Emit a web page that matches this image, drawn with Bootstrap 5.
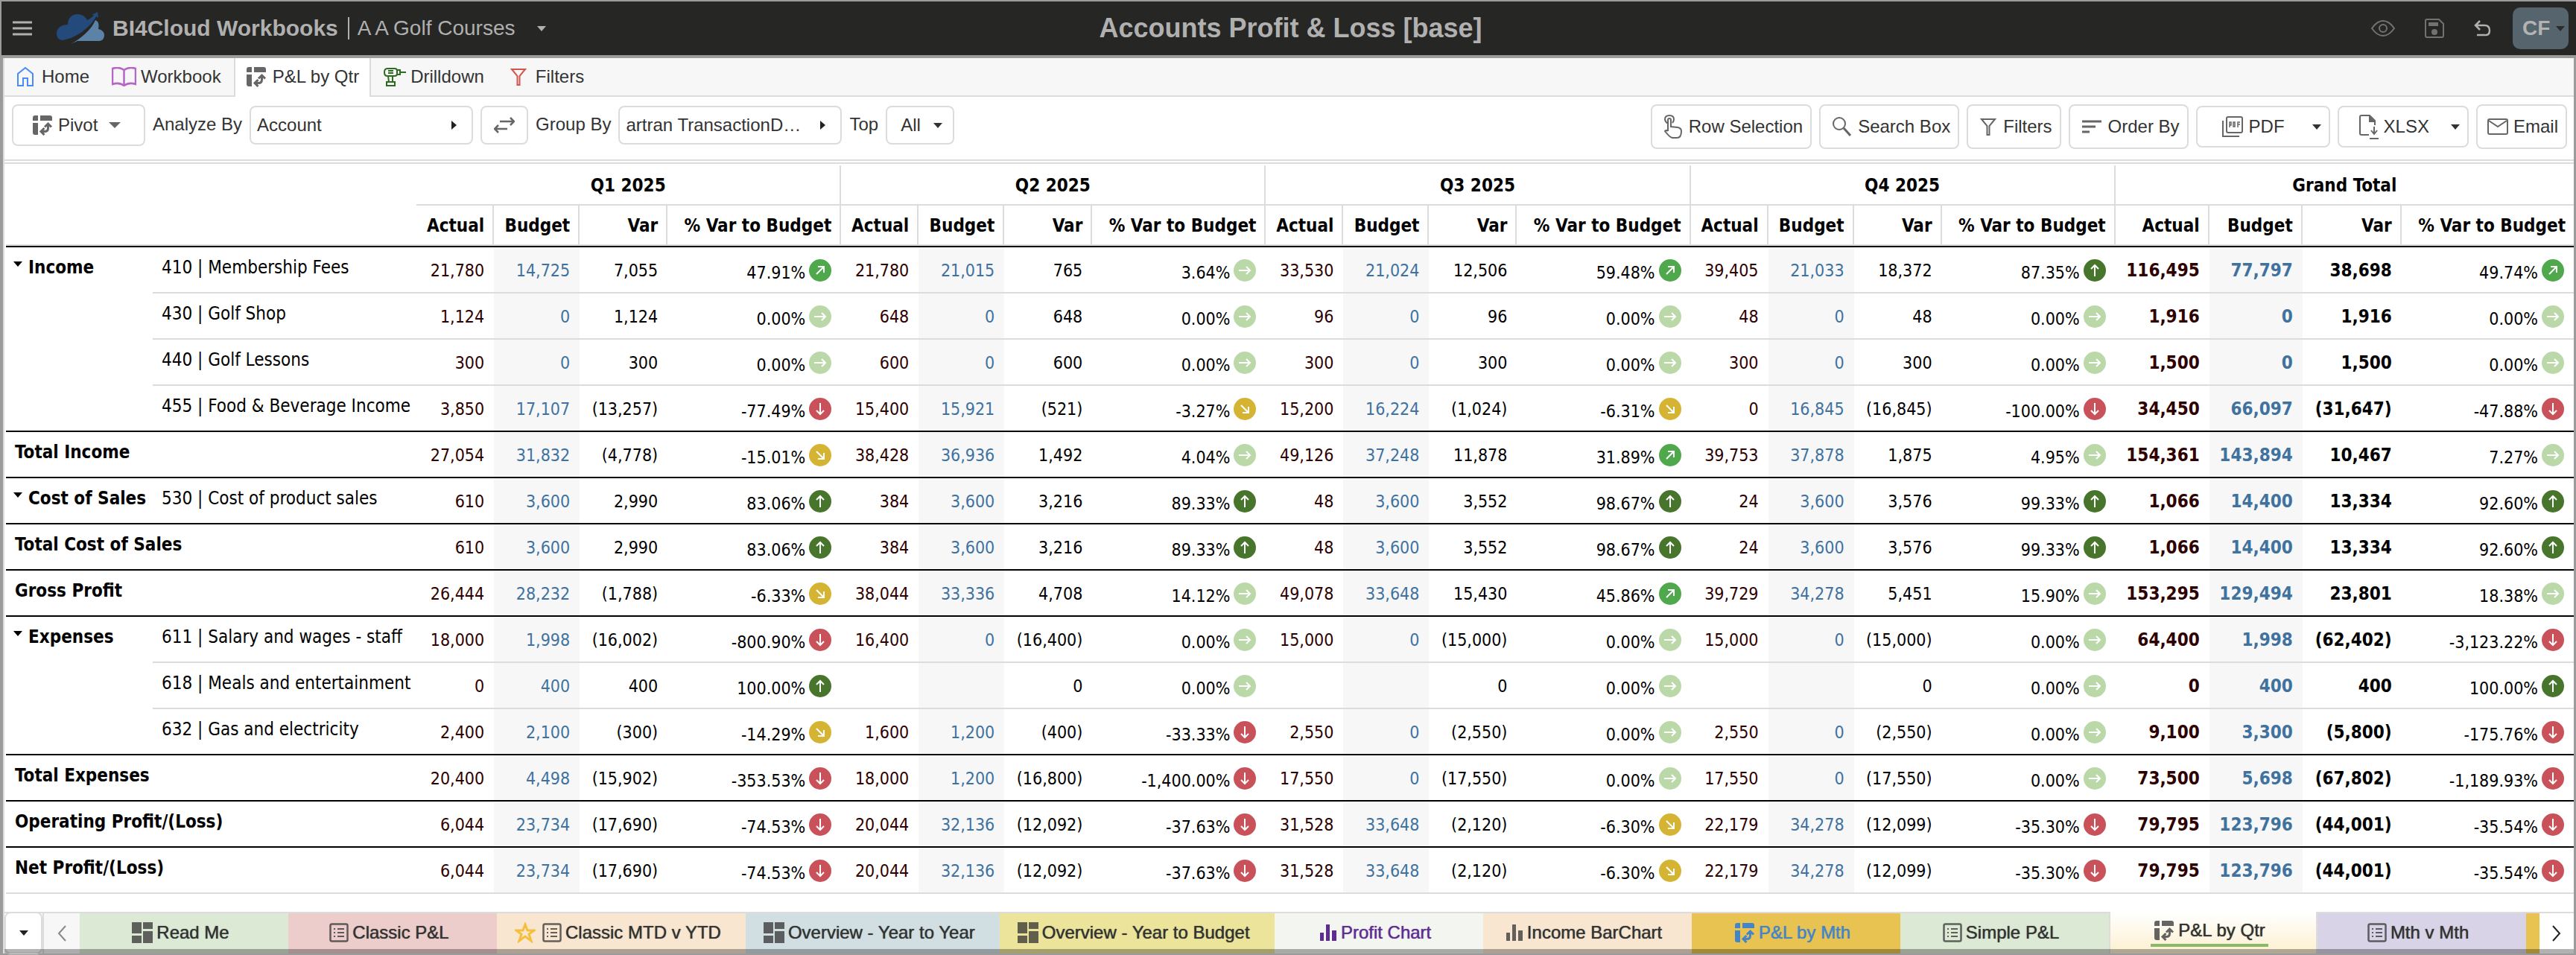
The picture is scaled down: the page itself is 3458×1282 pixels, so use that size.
<!DOCTYPE html>
<html lang="en">
<head>
<meta charset="utf-8">
<meta name="viewport" content="width=device-width, initial-scale=1">
<title>Accounts Profit &amp; Loss</title>
<link rel="stylesheet" href="https://cdn.jsdelivr.net/npm/bootstrap@5.3.0/dist/css/bootstrap.min.css">
<script src="https://cdn.jsdelivr.net/npm/bootstrap@5.3.0/dist/js/bootstrap.bundle.min.js"></script>
<style>
:root{--line:#dcdcdc;--ink:#333}
body{background:#9b9b9b;color:var(--ink);font-family:"Liberation Sans",Arial,sans-serif;font-size:24px;line-height:28px}
svg{display:block;flex:none;fill:none;stroke:currentColor;stroke-width:2}
.shell{padding:2px 0 2px 2px}
a{color:inherit;text-decoration:none}
.topbar{background:#262624;color:#b0b0b0;height:72px;padding:0 10px 0 15px;font-size:28px;line-height:34px}
.topbar button{background:none;border:0;color:inherit;padding:0}
.side-zone{flex:1 1 0}
.logo{margin-left:33px}
.topbar h1{font-size:36px;line-height:40px;font-weight:700;margin:0}
.brand-text{margin-left:11px;font-size:30px}
.pipe{width:2px;height:30px;background:#b0b0b0;margin:0 11px 0 13px}
.org-btn{margin-left:30px}
.dim{opacity:.55}
.icon-row{gap:40px;margin-right:29px}
.tri{width:0;height:0;border:6px solid transparent;border-top:7px solid currentColor;border-bottom:0}
.tri-lg{border-width:8px;border-top-width:8px;border-bottom:0}
.topbar .user-btn{background:#56646e;width:75px;height:56px;border-radius:10px;font-weight:700;color:#b3b3b3;padding-left:13px}
.user-btn .tri{border-top-color:#2b2b2b}
.stage{background:#fff;border:solid var(--line);border-width:0 0 0 2px;margin:4px 3px 0 2px}
.tabs-top{background:#f7f7f7;border-bottom:2px solid var(--line);height:52px}
.tabs-top a{display:flex;align-items:center;height:50px;padding:0 16px;gap:8px}
.tabs-top a.home{gap:11px;padding:0 13px 0 17px}
.tabs-top a.wide{gap:6px;padding:0 17px}
.tabs-top a.filt{gap:12px;padding:0 18px}
.tabs-top a.cur{background:#fff;height:52px;padding:0 14px 2px;border:solid var(--line);border-width:0 2px}
.tools{padding:10px 9px 14px 10px;border-bottom:2px solid var(--line)}
.tool-set{display:flex;align-items:flex-start;gap:10px}
.tools .tool-btn{display:flex;align-items:center;justify-content:center;border:2px solid var(--line);border-radius:8px;background:#fff;color:var(--ink);height:60px;padding:0 10px 0 16px;gap:9px;font-size:24px;line-height:28px}
.tools .pivot{height:56px;width:179px;padding:0 0 0 25px;gap:7px;justify-content:flex-start}
.tools .pivot .tri{margin-left:8px}
.tool-btn svg,.pivot .tri{color:#666}
.low{margin-top:2px}
.tools .split{height:56px;padding:0 10px 0 32px;gap:7px}
.split .tri{margin-left:30px}
.tools .xl{padding-left:27px}
.xl .tri{margin-left:22px}
.tools .mail{padding-left:13px;gap:7px}
.tools .swap{height:52px;width:64px;padding:0}
.tools label{margin-top:2px;height:52px;line-height:50px}
.pick{position:relative;margin-top:2px;height:52px;flex:none}
.pick select{appearance:none;width:100%;height:100%;border:2px solid var(--line);border-radius:8px;background:#fff;color:var(--ink);padding:0 8px;font-size:24px}
.pick::after{content:"";position:absolute;right:22px;top:20px;border:6px solid transparent;border-left:7px solid #222;border-right:0}
.pick.down::after{right:16px;top:23px;border:6px solid transparent;border-top:7px solid #333;border-bottom:0}
.pick.p-long{width:300px}
.pick.p-short{width:92px}
.pick.p-short select{padding:0 18px}
.grid-wrap{margin-top:2px;border-top:2px solid var(--line);padding:2px 0 22px 2px}
.pivot-grid{table-layout:fixed;width:100%;border-collapse:separate;border-spacing:0;color:#000;font-family:"DejaVu Sans Condensed","DejaVu Sans",sans-serif;font-stretch:condensed;font-size:23px;line-height:30px}
.pivot-grid th,.pivot-grid td.acct,.pivot-grid td.gt{font-size:24px}
.pivot-grid th{font-weight:700}
.pivot-grid thead th{height:54px;border-bottom:2px solid var(--line);border-right:2px solid var(--line);padding:12px 11px 10px 0;text-align:right;white-space:nowrap}
.pivot-grid thead tr:first-child th{text-align:center;padding-right:0}
.pivot-grid thead th:last-child,.pivot-grid thead th.corner{border-right:0}
.pivot-grid tbody td,.pivot-grid tbody th{height:62px;vertical-align:top;text-align:right;padding:16px 13px 0 0;border-bottom:2px solid var(--line);white-space:nowrap}
.pivot-grid tbody tr:first-child>td{height:64px}
.pivot-grid tbody tr:first-child>*{border-top:2px solid #000}
.pivot-grid tbody tr.rule>*,.pivot-grid tbody th.grp{border-bottom-color:#000}
.pivot-grid tbody th,.pivot-grid tbody td.acct{text-align:left;padding:12px 0 0 12px}
.pivot-grid tbody th.grp{padding-left:10px}
.grp .tri{display:inline-block;margin-right:8px;vertical-align:9px;border-top-color:#000}
.pivot-grid td.act{color:#2f0000}
.pivot-grid td.bud{color:#4072a0;background:#f7f7f7}
.pivot-grid td.gt{font-weight:700}
td svg{display:inline-block;vertical-align:-4px;margin-left:5px;stroke:#fff}
.bottom{height:56px;border-top:2px solid var(--line);position:relative}
.bottom::after{content:"";position:absolute;left:0;right:0;bottom:0;height:6px;background:rgba(0,0,0,.3)}
.bottom .nub{width:51px;height:57px;margin-top:-2px;border:2px solid var(--line);border-radius:8px;background:#fff;color:#222;padding:0}
.bottom .page-btn{width:50px;background:#f7f7f7;border:0;border-left:2px solid var(--line);color:#888;padding:0}
.bottom .next-btn{width:46px;background:#fff;color:#222;border:0;padding:0}
.sheet{display:flex;align-items:center;justify-content:center;gap:5px;min-width:280px;padding:0 33px 2px 24px;white-space:nowrap;text-shadow:0 0 1px currentColor}
.sheet svg{opacity:.75}
.c-green{background:#dce9d5}.c-pink{background:#edcdcc}.c-peach{background:#f8e6d1}.c-blue{background:#d1dfe3}.c-olive{background:#ebe49a}.c-pale{background:#f3f5f1;color:#5f2d91}.c-gold{background:#e8c352;color:#4484c8}.c-lilac{background:#d8d3e6}
.c-pale svg,.c-gold svg{opacity:1}
.sheet.on{background:linear-gradient(#fff,#fdf0d0);border-left:2px solid var(--line);border-right:2px solid var(--line);margin-top:-2px;padding-bottom:6px}
.sheet.on span{display:flex;gap:5px;align-items:center;border-bottom:4px solid #89ba67;padding:0 4px 4px;margin-top:8px}
.sliver{flex:1 1 0;background:#e8c352}
</style>
</head>
<body>
<svg width="0" height="0" class="position-absolute" aria-hidden="true">
<symbol id="i-pivot" viewBox="0 0 28 28"><path stroke="none" fill="currentColor" d="M4 1H8V8H1V4Q1 1 4 1ZM11 1H24Q27 1 27 4V8H11ZM1 11H8V27H4Q1 27 1 24Z"/><path d="M17 16.500L21.500 12L26 16.500M21.500 13V18Q21.500 22.500 17 22.500H13M16.500 18L12 22.500L16.500 27" stroke-width="3"/></symbol>
<symbol id="i-list" viewBox="0 0 26 26"><rect x="1.500" y="1.500" width="23" height="23" rx="2" stroke-width="2.500"/><path d="M6 8H8M6 13H8M6 18H8M11 8H20M11 13H20M11 18H20"/></symbol>
<symbol id="i-dash" viewBox="0 0 28 28"><path stroke="none" fill="currentColor" d="M0 0H13V15H0ZM15 0H28V9H15ZM0 18H13V28H0ZM15 12H28V28H15Z"/></symbol>
<symbol id="i-bars" viewBox="0 0 24 24"><path stroke="none" fill="currentColor" d="M1 12H6V23H1ZM9 1H14V23H9ZM17 9H23V23H17Z"/></symbol>
<symbol id="i-funnel" viewBox="0 0 22 24"><path d="M2 2H20L12.500 11V23H9.500V11Z"/></symbol>
<symbol id="i-up" viewBox="0 0 30 30"><circle cx="15" cy="15" r="15" fill="#47752c" stroke="none"/><path d="M15 23V8M10 13L15 8L20 13"/></symbol>
<symbol id="i-down" viewBox="0 0 30 30"><circle cx="15" cy="15" r="15" fill="#c9515a" stroke="none"/><path d="M15 7V22M10 17L15 22L20 17"/></symbol>
<symbol id="i-flat" viewBox="0 0 30 30"><circle cx="15" cy="15" r="15" fill="#bbd8a8" stroke="none"/><path d="M7 15H22M17 10L22 15L17 20"/></symbol>
<symbol id="i-rise" viewBox="0 0 30 30"><circle cx="15" cy="15" r="15" fill="#4fa84c" stroke="none"/><path d="M10 20L20 10M12 10H20V18"/></symbol>
<symbol id="i-dip" viewBox="0 0 30 30"><circle cx="15" cy="15" r="15" fill="#d6b433" stroke="none"/><path d="M10 10L20 20M20 12V20H12"/></symbol>
</svg>
<div class="shell d-flex flex-column min-vh-100">
<header class="topbar d-flex align-items-center">
 <div class="side-zone d-flex align-items-center">
  <button type="button" aria-label="Menu"><svg width="26" height="20"><path d="M0 2H26M0 10H26M0 18H26" stroke-width="3"/></svg></button>
  <svg class="logo" width="64" height="44" viewBox="0 0 64 44"><g stroke="none"><path fill="#234a7a" d="M0 29C0 21 7 17 15 17C15 8 21 3 28 3C35 3 39 7 41 11C44 10 48 7 50 4L47 4L55 0L56 8L53 6C46 20 27 35 8 38C3 38 0 34 0 29Z"/><path fill="#5d82a8" d="M19 43C32 36 47 24 52 11C57 13 57 18 56 23C61 24 64 27 64 31C64 36 61 39 57 39L28 39Z"/></g></svg>
  <strong class="brand-text text-nowrap">BI4Cloud Workbooks</strong><span class="pipe"></span><span class="text-nowrap">A A Golf Courses</span>
  <button type="button" class="org-btn" aria-label="Switch company"><span class="tri d-block"></span></button>
 </div>
 <h1>Accounts Profit &amp; Loss [base]</h1>
 <div class="side-zone d-flex align-items-center justify-content-end">
  <div class="icon-row d-flex align-items-center">
  <button type="button" class="dim" aria-label="Preview"><svg width="32" height="24"><path d="M1 12Q8 2 16 2T31 12Q24 22 16 22T1 12Z"/><circle cx="16" cy="12" r="5"/></svg></button>
  <button type="button" class="dim" aria-label="Save"><svg width="26" height="26"><path d="M3 1H19L25 7V23Q25 25 23 25H3Q1 25 1 23V3Q1 1 3 1Z"/><path stroke="none" fill="currentColor" d="M5 5H18V10H5Z"/><circle cx="13" cy="18" r="4" fill="currentColor" stroke="none"/></svg></button>
  <button type="button" aria-label="Undo"><svg width="23" height="22"><path d="M8 1L2 7L8 13M2 7H14Q21 7 21 14T14 20H4" stroke-width="2.500"/></svg></button>
  </div>
  <button type="button" class="user-btn d-flex align-items-center gap-2">CF<span class="tri"></span></button>
 </div>
</header>
<main class="stage d-flex flex-column flex-grow-1">
<nav class="tabs-top d-flex">
 <a class="home" href="#"><svg width="22" height="26" color="#4a8cf5"><path d="M1 25V9L11 1L21 9V25H14V15H8V25Z"/></svg>Home</a>
 <a class="wide" href="#"><svg width="33" height="26" color="#b566c6"><path d="M16.500 4Q10 -1 1 2V23Q10 20 16.500 25Q23 20 32 23V2Q23 -1 16.500 4V25" stroke-width="2.500"/></svg>Workbook</a>
 <a class="cur" href="#"><svg width="28" height="28" color="#666"><use href="#i-pivot"/></svg>P&amp;L by Qtr</a>
 <a class="wide" href="#"><svg width="30" height="26" color="#2f6b1f"><path d="M5 2H15Q18 2 18 5V9Q18 12 15 12H5Q1 12 1 7T5 2ZM18 4L22 4V10L18 10M22 7H30M6 5H13M6 8H13M6 12L7 20M12 12V20M4 20H15V25H4Z"/></svg>Drilldown</a>
 <a class="filt" href="#"><svg width="22" height="24" color="#cf5750"><use href="#i-funnel"/></svg>Filters</a>
</nav>
<section class="tools d-flex align-items-start justify-content-between">
 <div class="tool-set">
  <button type="button" class="tool-btn pivot"><svg width="28" height="28"><use href="#i-pivot"/></svg>Pivot<span class="tri tri-lg"></span></button>
  <label for="analyze">Analyze By</label>
  <div class="pick p-long"><select id="analyze"><option>Account</option></select></div>
  <button type="button" class="tool-btn swap low" aria-label="Swap"><svg width="28" height="22"><path d="M8 6H27M22 1L27 6L22 11M18 16H1M6 11L1 16L6 21" stroke-width="2.500"/></svg></button>
  <label for="group">Group By</label>
  <div class="pick p-long"><select id="group"><option>artran TransactionD…</option></select></div>
  <label for="topn">Top</label>
  <div class="pick down p-short"><select id="topn"><option>All</option></select></div>
 </div>
 <div class="tool-set">
  <button type="button" class="tool-btn"><svg width="24" height="32"><path d="M5 12Q1 9 1 6Q1 1 7 1T13 6Q13 9 11 11M5 22V7Q5 5 7 5T9 7V16L18 17Q23 18 23 22Q23 31 17 31H11Q7 30 1 22Q3 20 5 22"/></svg>Row Selection</button>
  <button type="button" class="tool-btn"><svg width="25" height="26"><circle cx="9" cy="9" r="8"/><path d="M15 15L24 25" stroke-width="3"/></svg>Search Box</button>
  <button type="button" class="tool-btn"><svg width="22" height="24"><use href="#i-funnel"/></svg>Filters</button>
  <button type="button" class="tool-btn"><svg width="26" height="18"><path d="M0 2H26M0 9H18M0 16H10" stroke-width="3"/></svg>Order By</button>
  <button type="button" class="tool-btn split low"><svg width="30" height="30"><rect x="7" y="2" width="21" height="21" rx="2"/><path d="M2 7V28H24"/><path d="M11 16V9H13V13H11M16 9V15H18V9ZM22 16V9H25M22 12H25" stroke-width="1.500"/></svg>PDF<span class="tri"></span></button>
  <button type="button" class="tool-btn split low xl"><svg width="26" height="34"><path d="M13 28H3Q1 28 1 26V4Q1 2 3 2H14L21 9V15M20 17V27M16 22L20 27L24 22M14 33H26"/><path stroke="none" fill="currentColor" d="M13 2L22 11H13Z"/></svg>XLSX<span class="tri"></span></button>
  <button type="button" class="tool-btn mail"><svg width="28" height="22"><rect x="1" y="1" width="26" height="20" rx="2"/><path d="M2 3L14 11L26 3"/></svg>Email</button>
 </div>
</section>
<div class="grid-wrap flex-grow-1">
<table class="pivot-grid">
 <colgroup id="cols"></colgroup>
 <thead id="head"></thead>
 <tbody id="body"></tbody>
</table>
</div>
<nav class="bottom d-flex">
 <button type="button" class="nub d-flex align-items-center justify-content-center" aria-label="All sheets"><span class="tri"></span></button>
 <button type="button" class="page-btn d-flex align-items-center justify-content-center" aria-label="Previous"><svg width="12" height="22"><path d="M11 1L2 11L11 21"/></svg></button>
 <a href="#" class="sheet c-green"><svg width="28" height="28"><use href="#i-dash"/></svg>Read Me</a>
 <a href="#" class="sheet c-pink"><svg width="26" height="26"><use href="#i-list"/></svg>Classic P&amp;L</a>
 <a href="#" class="sheet c-peach"><svg width="28" height="28" color="#f5bf3c" class="opacity-100 me-1"><path d="M14 3L17 11H26L19 16L22 25L14 19L6 25L9 16L2 11H11Z" stroke-width="3"/></svg><svg width="26" height="26"><use href="#i-list"/></svg>Classic MTD v YTD</a>
 <a href="#" class="sheet c-blue"><svg width="28" height="28"><use href="#i-dash"/></svg>Overview - Year to Year</a>
 <a href="#" class="sheet c-olive"><svg width="28" height="28"><use href="#i-dash"/></svg>Overview - Year to Budget</a>
 <a href="#" class="sheet c-pale"><svg width="24" height="24"><use href="#i-bars"/></svg>Profit Chart</a>
 <a href="#" class="sheet c-peach"><svg width="24" height="24"><use href="#i-bars"/></svg>Income BarChart</a>
 <a href="#" class="sheet c-gold"><svg width="28" height="28"><use href="#i-pivot"/></svg>P&amp;L by Mth</a>
 <a href="#" class="sheet c-green"><svg width="26" height="26"><use href="#i-list"/></svg>Simple P&amp;L</a>
 <a href="#" class="sheet on"><span><svg width="28" height="28"><use href="#i-pivot"/></svg>P&amp;L by Qtr</span></a>
 <a href="#" class="sheet c-lilac"><svg width="26" height="26"><use href="#i-list"/></svg>Mth v Mth</a>
 <span class="sliver"></span>
 <button type="button" class="next-btn d-flex align-items-center justify-content-center" aria-label="Next"><svg width="12" height="22"><path d="M1 1L10 11L1 21"/></svg></button>
</nav>
</main>
</div>
<script>
const periods = ["Q1 2025","Q2 2025","Q3 2025","Q4 2025","Grand Total"];
const widths = [197,354,...Array(4).fill([104,115,118,233]).flat(),126,125,133,231];
// Each row: group cell (name and span), account, then actual/budget/var/percent+trend per period.
// Trend letters: u up, r rising, f flat, p dipping, d down.
const rows = [
 {g:["Income",4],a:"410 | Membership Fees",v:"21,780 14,725 7,055 47.91%r 21,780 21,015 765 3.64%f 33,530 21,024 12,506 59.48%r 39,405 21,033 18,372 87.35%u 116,495 77,797 38,698 49.74%r"},
 {a:"430 | Golf Shop",v:"1,124 0 1,124 0.00%f 648 0 648 0.00%f 96 0 96 0.00%f 48 0 48 0.00%f 1,916 0 1,916 0.00%f"},
 {a:"440 | Golf Lessons",v:"300 0 300 0.00%f 600 0 600 0.00%f 300 0 300 0.00%f 300 0 300 0.00%f 1,500 0 1,500 0.00%f"},
 {a:"455 | Food & Beverage Income",rule:1,v:"3,850 17,107 (13,257) -77.49%d 15,400 15,921 (521) -3.27%p 15,200 16,224 (1,024) -6.31%p 0 16,845 (16,845) -100.00%d 34,450 66,097 (31,647) -47.88%d"},
 {t:"Total Income",rule:1,v:"27,054 31,832 (4,778) -15.01%p 38,428 36,936 1,492 4.04%f 49,126 37,248 11,878 31.89%r 39,753 37,878 1,875 4.95%f 154,361 143,894 10,467 7.27%f"},
 {g:["Cost of Sales",1],a:"530 | Cost of product sales",rule:1,v:"610 3,600 2,990 83.06%u 384 3,600 3,216 89.33%u 48 3,600 3,552 98.67%u 24 3,600 3,576 99.33%u 1,066 14,400 13,334 92.60%u"},
 {t:"Total Cost of Sales",rule:1,v:"610 3,600 2,990 83.06%u 384 3,600 3,216 89.33%u 48 3,600 3,552 98.67%u 24 3,600 3,576 99.33%u 1,066 14,400 13,334 92.60%u"},
 {t:"Gross Profit",rule:1,v:"26,444 28,232 (1,788) -6.33%p 38,044 33,336 4,708 14.12%f 49,078 33,648 15,430 45.86%r 39,729 34,278 5,451 15.90%f 153,295 129,494 23,801 18.38%f"},
 {g:["Expenses",3],a:"611 | Salary and wages - staff",v:"18,000 1,998 (16,002) -800.90%d 16,400 0 (16,400) 0.00%f 15,000 0 (15,000) 0.00%f 15,000 0 (15,000) 0.00%f 64,400 1,998 (62,402) -3,123.22%d"},
 {a:"618 | Meals and entertainment",v:"0 400 400 100.00%u _ _ 0 0.00%f _ _ 0 0.00%f _ _ 0 0.00%f 0 400 400 100.00%u"},
 {a:"632 | Gas and electricity",rule:1,v:"2,400 2,100 (300) -14.29%p 1,600 1,200 (400) -33.33%d 2,550 0 (2,550) 0.00%f 2,550 0 (2,550) 0.00%f 9,100 3,300 (5,800) -175.76%d"},
 {t:"Total Expenses",rule:1,v:"20,400 4,498 (15,902) -353.53%d 18,000 1,200 (16,800) -1,400.00%d 17,550 0 (17,550) 0.00%f 17,550 0 (17,550) 0.00%f 73,500 5,698 (67,802) -1,189.93%d"},
 {t:"Operating Profit/(Loss)",rule:1,v:"6,044 23,734 (17,690) -74.53%d 20,044 32,136 (12,092) -37.63%d 31,528 33,648 (2,120) -6.30%p 22,179 34,278 (12,099) -35.30%d 79,795 123,796 (44,001) -35.54%d"},
 {t:"Net Profit/(Loss)",v:"6,044 23,734 (17,690) -74.53%d 20,044 32,136 (12,092) -37.63%d 31,528 33,648 (2,120) -6.30%p 22,179 34,278 (12,099) -35.30%d 79,795 123,796 (44,001) -35.54%d"}
];
const trend = {u:"up",r:"rise",f:"flat",p:"dip",d:"down"};
const esc = s => s.replace("&","&amp;");
document.getElementById("cols").innerHTML = widths.map(w => `<col style="width:${w}px">`).join("");
document.getElementById("head").innerHTML =
 `<tr><th class="corner" colspan="2" rowspan="2"></th>${periods.map(p => `<th colspan="4" scope="colgroup">${p}</th>`).join("")}</tr>
 <tr>${periods.map(() => ["Actual","Budget","Var","% Var to Budget"].map(h => `<th scope="col">${h}</th>`).join("")).join("")}</tr>`;
document.getElementById("body").innerHTML = rows.map(r => {
 let h = `<tr class="${r.rule ? "rule" : ""}">`;
 if (r.g) h += `<th class="grp" scope="rowgroup" rowspan="${r.g[1]}"><span class="tri"></span>${r.g[0]}</th>`;
 h += r.t ? `<th colspan="2" scope="row">${r.t}</th>` : `<td class="acct">${esc(r.a)}</td>`;
 r.v.split(" ").forEach((v, i) => {
  const k = i % 4, gt = i > 15 && k < 3 ? " gt" : "";
  if (v === "_") v = "";
  if (k === 3) v = `${v.slice(0,-1)}<svg width="30" height="30"><use href="#i-${trend[v.slice(-1)]}"/></svg>`;
  h += `<td class="${["act","bud","var","pct"][k]}${gt}">${v}</td>`;
 });
 return h + "</tr>";
}).join("");
</script>
</body>
</html>
